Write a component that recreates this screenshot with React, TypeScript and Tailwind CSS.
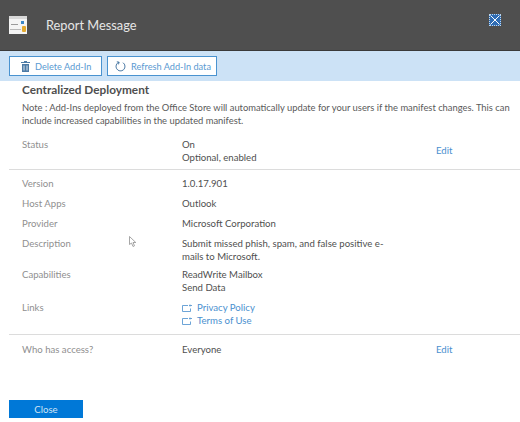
const font = { fontFamily: '"Lato", "Open Sans", sans-serif' };

function LinkIcon() {
  return (
    <svg width="11" height="8" viewBox="0 0 11 8" fill="none" stroke="#5c9ad2" strokeWidth="0.9" className="shrink-0">
      <path d="M6 1.5H0.5V7.5H8.5V4.5" />
      <path d="M8 0.5V2.5M7 1.5H10" />
    </svg>
  );
}

function Row({ label, className = "", children }: { label: string; className?: string; children: React.ReactNode }) {
  return (
    <div className={`flex pl-[13px] ${className}`}>
      <div className="w-[160px] shrink-0 text-[#8f8f8f]">{label}</div>
      <div className="flex-1 text-[#4f4f4f]">{children}</div>
    </div>
  );
}

function Edit({ className = "" }: { className?: string }) {
  return <div className={`w-[84px] shrink-0 self-center text-[#4a90cf] ${className}`}>Edit</div>;
}

export default function App() {
  return (
    <div style={font} className="relative flex h-[422px] w-[520px] flex-col overflow-hidden bg-white text-[9.6px] leading-[13px]">
      <header className="flex h-[51px] items-center justify-between border-b border-[#3a3a3a] bg-[#4f4f4f] pl-[9px] pr-[19px]">
        <div className="flex items-center gap-[19px]">
          <svg width="18" height="18" viewBox="0 0 18 18">
            <rect x="0" y="0" width="18" height="18" fill="#f4f4f4" />
            <rect x="0" y="0" width="18" height="3" fill="#d8d8d8" />
            <rect x="2" y="8" width="7" height="1" fill="#9a9a9a" />
            <rect x="1" y="13" width="11" height="1" fill="#b8b8b8" />
            <rect x="12" y="5" width="3" height="3" fill="#3b87c8" />
            <rect x="13" y="10" width="4" height="6" rx="1" fill="#e3a92f" />
          </svg>
          <span className="text-[12.8px] text-[#e6e6e6]">Report Message</span>
        </div>
        <div className="mb-[10px] flex h-[12px] w-[12px] items-center justify-center border border-dotted border-[#bcd6ee] bg-[#2f6db5]">
          <svg width="10" height="10" viewBox="0 0 10 10" stroke="#ffffff" strokeWidth="1">
            <path d="M0.5 0.5L9.5 9.5M9.5 0.5L0.5 9.5" />
          </svg>
        </div>
      </header>

      <div className="flex h-[30px] items-center gap-[5px] bg-[#cce2f6] pl-[9px]">
        <button className="flex h-[20px] w-[93px] items-center gap-[5px] whitespace-nowrap border border-[#4a93d0] bg-white pl-[11px] text-[9.2px] text-[#5a9ad2]">
          <svg width="9" height="11" viewBox="0 0 9 11" fill="#4d7ba6">
            <rect x="0" y="1" width="9" height="1" />
            <rect x="3" y="0" width="3" height="1" />
            <path d="M1 3H8V11H1Z" />
            <path d="M3 4.5V9.5M6 4.5V9.5" stroke="#ffffff" strokeWidth="0.8" />
          </svg>
          <span>Delete Add-In</span>
        </button>
        <button className="flex h-[20px] w-[110px] items-center gap-[5px] whitespace-nowrap border border-[#4a93d0] bg-white pl-[7px] text-[9.2px] text-[#5a9ad2]">
          <svg width="11" height="11" viewBox="0 0 11 11" fill="none" stroke="#4d7ba6" strokeWidth="1">
            <path d="M4 1.2A4.5 4.5 0 1 0 8 1.7" />
            <path d="M1.8 0.8L4.2 1.2L3.4 3.4" />
          </svg>
          <span>Refresh Add-In data</span>
        </button>
      </div>

      <main className="flex flex-1 flex-col">
        <div className="pl-[22px] pt-[1px]">
          <h1 className="text-[11.8px] font-bold leading-[15px] text-[#4f4f4f]">Centralized Deployment</h1>
          <p className="mt-[4px] whitespace-pre text-[9.4px] text-[#5a5a5a]">
            {"Note : Add-Ins deployed from the Office Store will automatically update for your users if the manifest changes. This can\ninclude increased capabilities in the updated manifest."}
          </p>
        </div>

        <div className="ml-[9px] mt-[11px] flex flex-col">
          <Row label="Status" className="border-b border-[#dcdcdc] pb-[5px]">
            <div className="flex">
              <div className="flex-1">
                <div>On</div>
                <div>Optional, enabled</div>
              </div>
              <Edit className="mb-[2px]" />
            </div>
          </Row>
          <Row label="Version" className="mt-[7px]">1.0.17.901</Row>
          <Row label="Host Apps" className="mt-[7px]">Outlook</Row>
          <Row label="Provider" className="mt-[7px]">Microsoft Corporation</Row>
          <Row label="Description" className="mt-[7px]">
            <div className="w-[210px] whitespace-pre">{"Submit missed phish, spam, and false positive e-\nmails to Microsoft."}</div>
          </Row>
          <Row label="Capabilities" className="mt-[5px]">
            <div>ReadWrite Mailbox</div>
            <div>Send Data</div>
          </Row>
          <Row label="Links" className="mt-[7px]">
            <div className="flex items-center gap-[4px] text-[#4a90cf]"><LinkIcon />Privacy Policy</div>
            <div className="flex items-center gap-[4px] text-[#4a90cf]"><LinkIcon />Terms of Use</div>
          </Row>
          <Row label="Who has access?" className="mt-[7px] border-t border-[#dcdcdc] pt-[8px]">
            <div className="flex">
              <div className="flex-1">Everyone</div>
              <Edit />
            </div>
          </Row>
        </div>

        <button className="mb-[4px] ml-[9px] mt-auto h-[18px] w-[74px] bg-[#0078d7] text-center text-[#cfe3f5]">Close</button>
      </main>

      <svg className="absolute left-[129px] top-[236px]" width="8" height="11" viewBox="0 0 8 11" fill="#ffffff" stroke="#8f8f8f" strokeWidth="0.8">
        <path d="M0.5 0.5V8.5L2.5 7L4 10.5L5.5 9.8L4 6.5H6.8Z" />
      </svg>
    </div>
  );
}
